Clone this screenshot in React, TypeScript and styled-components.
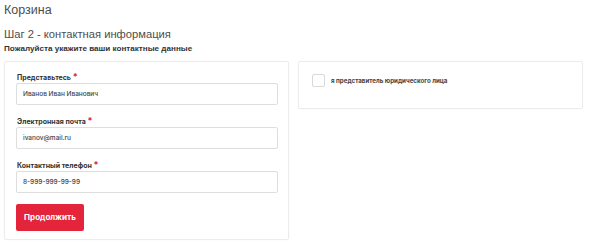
import React from 'react';
import styled, { createGlobalStyle } from 'styled-components';

const GlobalStyle = createGlobalStyle`
    html, body {
        margin: 0;
        padding: 0;
        background: #fff;
    }
    * {
        box-sizing: border-box;
    }
`;

const fields = [
    { label: 'Представьтесь', value: 'Иванов Иван Иванович' },
    { label: 'Электронная почта', value: 'ivanov@mail.ru' },
    { label: 'Контактный телефон', value: '8-999-999-99-99' },
];

const App = () => {
    return (
        <>
            <GlobalStyle />
            <Page>
                <PageTitle>Корзина</PageTitle>
                <StepTitle>Шаг 2 - контактная информация</StepTitle>
                <Hint>Пожалуйста укажите ваши контактные данные</Hint>
                <Columns>
                    <Card>
                        {fields.map((f) => (
                            <Field key={f.label}>
                                <Label>
                                    {f.label} <Star>*</Star>
                                </Label>
                                <Input defaultValue={f.value} />
                            </Field>
                        ))}
                        <SubmitButton>Продолжить</SubmitButton>
                    </Card>
                    <Card $compact>
                        <CheckRow>
                            <CheckBox type='checkbox' />
                            <CheckText>я представитель юридического лица</CheckText>
                        </CheckRow>
                    </Card>
                </Columns>
            </Page>
        </>
    );
};

export default App;

const Page = styled.div`
    width: 600px;
    height: 244px;
    padding: 0 4px;
    font-family: 'Liberation Sans', Arial, sans-serif;
    overflow: hidden;
`;

const PageTitle = styled.h1`
    margin: 0;
    padding-top: 2px;
    font-size: 12.5px;
    line-height: 16px;
    font-weight: 400;
    color: #4d4d4d;
`;

const StepTitle = styled.h2`
    margin: 8px 0 0;
    font-size: 11.2px;
    line-height: 16px;
    font-weight: 400;
    color: #4d4d4d;
`;

const Hint = styled.p`
    margin: 2px 0 0;
    font-size: 8.1px;
    line-height: 10px;
    font-weight: 700;
    color: #333;
`;

const Columns = styled.div`
    display: flex;
    align-items: flex-start;
    gap: 9px;
    margin-top: 7px;
`;

const Card = styled.div<{ $compact?: boolean }>`
    width: 285px;
    height: ${(p) => (p.$compact ? '48px' : '179px')};
    border: 1px solid #ececec;
    border-radius: 2px;
    background: #fff;
    box-shadow: 0 0 2px rgba(0, 0, 0, 0.04);
    padding: ${(p) => (p.$compact ? '12px 13px' : '10px 11px 0')};
    font-family: Inter, 'Noto Sans', sans-serif;
`;

const Field = styled.div`
    display: flex;
    flex-direction: column;
    margin-bottom: 11px;
`;

const Label = styled.label`
    font-size: 7px;
    line-height: 9px;
    font-weight: 700;
    color: #333;
    margin-bottom: 1px;
    padding-left: 1px;
`;

const Star = styled.span`
    color: #e3243b;
    font-size: 9px;
`;

const Input = styled.input`
    width: 262px;
    height: 22px;
    border: 1px solid #dedede;
    border-radius: 2px;
    padding: 0 6px;
    font-family: Inter, 'Noto Sans', sans-serif;
    font-size: 6.5px;
    font-weight: 500;
    color: #444;
    outline: none;
    box-shadow: inset 0 0 1px rgba(0, 0, 0, 0.06);
`;

const SubmitButton = styled.button`
    margin-top: -1px;
    width: 68px;
    height: 27px;
    border: none;
    border-radius: 2px;
    background: #e3243b;
    color: #fff;
    font-family: Inter, 'Noto Sans', sans-serif;
    font-size: 8px;
    font-weight: 700;
    cursor: pointer;
`;

const CheckRow = styled.label`
    display: flex;
    align-items: center;
    gap: 6px;
`;

const CheckBox = styled.input`
    appearance: none;
    margin: 0;
    width: 13px;
    height: 13px;
    border: 1px solid #d9d9d9;
    border-radius: 2px;
    background: #fff;
`;

const CheckText = styled.span`
    font-size: 6.2px;
    font-weight: 700;
    color: #444;
`;
